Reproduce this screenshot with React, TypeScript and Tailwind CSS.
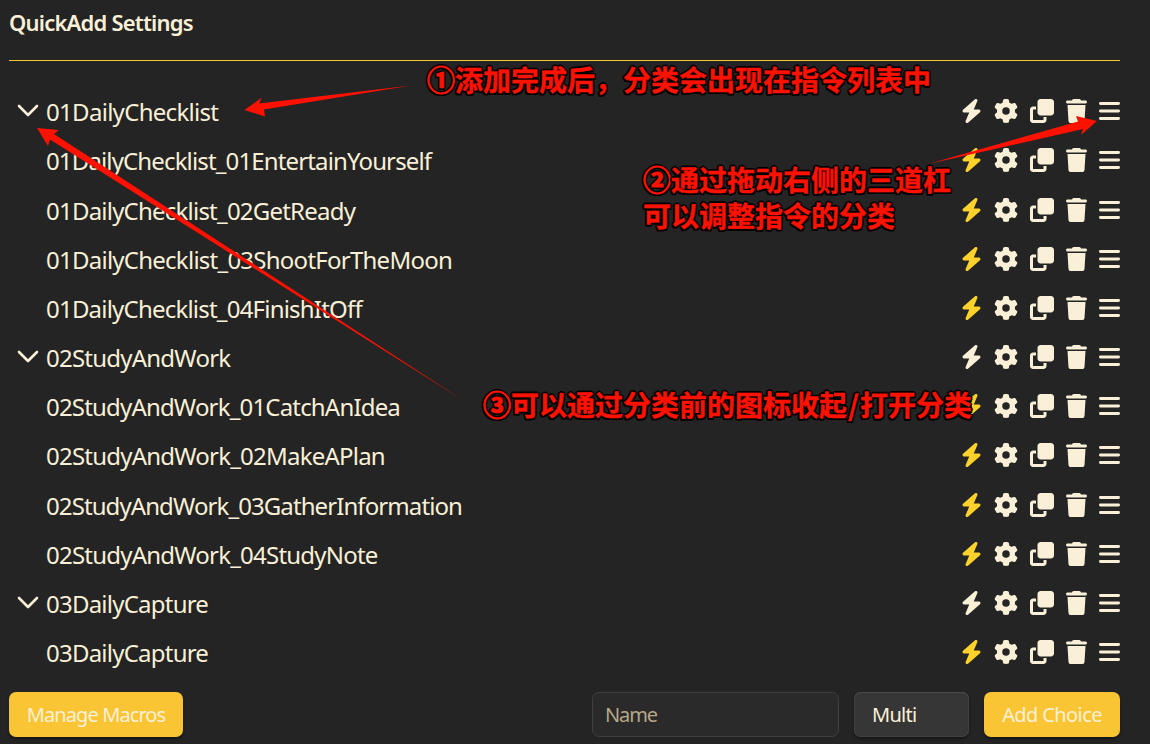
import type { ReactNode } from "react";
import { FaBolt, FaGear, FaClone, FaTrash } from "react-icons/fa6";

type Row = { name: string; group?: boolean; spacing: string };

const rows: Row[] = [
  { name: "01DailyChecklist", group: true, spacing: "tracking-[-0.7px]" },
  { name: "01DailyChecklist_01EntertainYourself", spacing: "tracking-[-0.86px]" },
  { name: "01DailyChecklist_02GetReady", spacing: "tracking-[-0.78px]" },
  { name: "01DailyChecklist_03ShootForTheMoon", spacing: "tracking-[-0.75px]" },
  { name: "01DailyChecklist_04FinishItOff", spacing: "tracking-[-0.79px]" },
  { name: "02StudyAndWork", group: true, spacing: "tracking-[-0.77px]" },
  { name: "02StudyAndWork_01CatchAnIdea", spacing: "tracking-[-0.82px]" },
  { name: "02StudyAndWork_02MakeAPlan", spacing: "tracking-[-0.78px]" },
  { name: "02StudyAndWork_03GatherInformation", spacing: "tracking-[-0.91px]" },
  { name: "02StudyAndWork_04StudyNote", spacing: "tracking-[-0.78px]" },
  { name: "03DailyCapture", group: true, spacing: "tracking-[-0.77px]" },
  { name: "03DailyCapture", spacing: "tracking-[-0.77px]" },
];

function Chevron() {
  return (
    <svg className="h-[13px] w-[22px]" viewBox="0 0 22 13" fill="none" stroke="currentColor" strokeWidth="2.6" strokeLinecap="round" strokeLinejoin="round">
      <path d="M2 2 11 11 20 2" />
    </svg>
  );
}

function Bars() {
  return (
    <svg className="h-[18px] w-[21px]" viewBox="0 0 21 18" fill="none" stroke="currentColor" strokeWidth="2.8" strokeLinecap="round">
      <path d="M1.4 1.5H19.6M1.4 9H19.6M1.4 16.5H19.6" />
    </svg>
  );
}

function ChoiceRow({ row }: { row: Row }) {
  return (
    <div className="flex h-[49.18px] items-center">
      <div className="flex w-[37px] pb-px pl-2">{row.group && <Chevron />}</div>
      <div className={"flex-1 whitespace-nowrap pt-[2px] text-[24px] leading-8 " + row.spacing}>{row.name}</div>
      <div className="flex items-center">
        <FaBolt className={"mr-[12px] h-6 w-[21px] " + (row.group ? "" : "text-[#ffd12b]")} />
        <FaGear className="mr-3 size-6" />
        <FaClone className="mr-3 size-6" />
        <FaTrash className="mr-3 h-6 w-[21px]" />
        <Bars />
      </div>
    </div>
  );
}

function Note({ className, mark, children }: { className: string; mark: string; children: ReactNode }) {
  return (
    <div
      className={
        "absolute whitespace-nowrap font-['Noto_Sans_CJK_SC',sans-serif] text-[28px] font-bold leading-9 text-[#ff1100] [-webkit-text-stroke:0.4px_#ff1100] [text-shadow:2px_0_#000,-2px_0_#000,0_2px_#000,0_-2px_#000,1.5px_1.5px_#000,-1.5px_1.5px_#000,1.5px_-1.5px_#000,-1.5px_-1.5px_#000] " +
        className
      }
    >
      <span className="[-webkit-text-stroke:1.1px_#ff1100]">{mark}</span>
      {children}
    </div>
  );
}

export default function App() {
  return (
    <div className="relative flex h-[744px] w-[1150px] flex-col overflow-hidden bg-[#242424] pl-[9px] pr-[30px] font-['Noto_Sans','Noto_Sans_CJK_SC',sans-serif] text-[#faf0d7]">
      <header className="h-[61px] border-b border-[#f9c535] pt-[7px]">
        <h1 className="text-[22px] font-semibold leading-[30px] tracking-[-0.8px]">QuickAdd Settings</h1>
      </header>
      <main className="mt-[25.6px] h-[590.4px]">
        {rows.map((row, i) => (
          <ChoiceRow key={i} row={row} />
        ))}
      </main>
      <footer className="mt-[15px] flex text-[20px]">
        <button className="h-[45px] w-[174px] rounded-[7px] bg-[#f9c535] pt-0.5 tracking-[-0.9px] shadow-[0_2px_3px_#0006]">Manage Macros</button>
        <input
          className="ml-auto h-[45px] w-[247px] rounded-[7px] border border-[#3f3f3f] bg-[#2a2a2a] px-3 tracking-[-1.1px] placeholder:text-[#b5a887]"
          placeholder="Name"
        />
        <button className="ml-[15px] h-[45px] w-[115px] rounded-[7px] bg-[#363636] pl-[18px] pt-0.5 text-left tracking-[-0.7px] shadow-[0_2px_3px_#0006,inset_0_1px_0_#4a4a4a,inset_0_0_0_1px_#404040]">
          Multi
        </button>
        <button className="ml-[15px] h-[45px] w-[136px] rounded-[7px] bg-[#f9c535] pt-0.5 tracking-[-0.6px] shadow-[0_2px_3px_#0006]">Add Choice</button>
      </footer>

      <svg className="pointer-events-none absolute left-0 top-0" width="1150" height="744" fill="#ff1100">
        <path d="M411 85.500 264 109.500 265 116.500 244.500 110 262 97.500 259 103.500Z" />
        <path d="M928 164 1078 121.500 1076 116 1097 121 1081 135 1083 129Z" />
        <path d="M464 401 50 139.500 48 146 37 128 59 130 54 134Z" />
      </svg>
      <Note className="left-[427px] top-[61px]" mark="①">添加完成后，分类会出现在指令列表中</Note>
      <Note className="left-[643px] top-[161px]" mark="②">
        通过拖动右侧的三道杠
        <br />
        可以调整指令的分类
      </Note>
      <Note className="left-[483px] top-[386px]" mark="③">
        可以通过分类前的图标收起<span className="px-px">/</span>打开分类
      </Note>
    </div>
  );
}
